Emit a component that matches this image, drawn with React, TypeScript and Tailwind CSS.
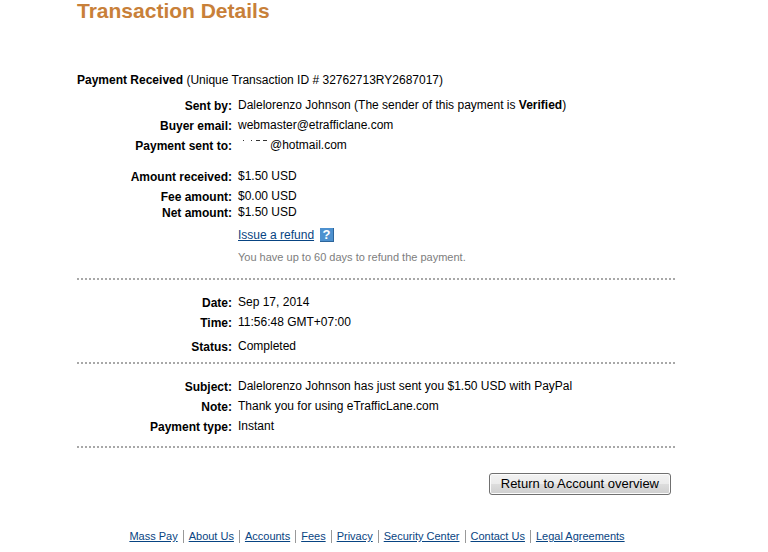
import type { ReactNode } from "react";

function Row({ label, children, gap = "mb-1" }: { label: string; children: ReactNode; gap?: string }) {
  return (
    <div className={`flex items-start gap-1.5 ${gap}`}>
      <dt className="-mb-px w-[155px] shrink-0 pt-px text-right font-bold">{label}</dt>
      <dd className="min-w-0 flex-1">{children}</dd>
    </div>
  );
}

function Divider() {
  return (
    <hr className="h-0.5 border-0 bg-[repeating-linear-gradient(to_right,#a8a8a8_0_2px,transparent_2px_4px)]" />
  );
}

const footerLinks = [
  "Mass Pay",
  "About Us",
  "Accounts",
  "Fees",
  "Privacy",
  "Security Center",
  "Contact Us",
  "Legal Agreements",
];

export default function App() {
  return (
    <div className="bg-white pr-4 pl-[77px] font-['Liberation_Sans',Arial,sans-serif] text-xs leading-4 text-black">
      <main className="max-w-[600px]">
        <h1 className="mb-[50px] text-[21px] leading-[22px] font-bold text-[#c88039]">Transaction Details</h1>
        <p className="mb-[9px]">
          <strong>Payment Received</strong> (Unique Transaction ID # 32762713RY2687017)
        </p>
        <dl>
          <Row label="Sent by:">
            Dalelorenzo Johnson (The sender of this payment is <strong>Verified</strong>)
          </Row>
          <Row label="Buyer email:">webmaster@etrafficlane.com</Row>
          <Row label="Payment sent to:" gap="mb-[15px]">
            <span className="flex">
              <svg aria-hidden="true" className="h-4 w-8" viewBox="0 0 32 16" stroke="#333" strokeWidth="1">
                <path d="M5 3.5h1M13 3.5h1M18 3.5h4M25 3.5h4" />
              </svg>
              @hotmail.com
            </span>
          </Row>
          <Row label="Amount received:">$1.50 USD</Row>
          <Row label="Fee amount:" gap="mb-0">$0.00 USD</Row>
          <Row label="Net amount:" gap="mb-[7px]">$1.50 USD</Row>
        </dl>
        <div className="pb-[13px] pl-[161px]">
          <div className="mb-1.5 flex items-center gap-1.5">
            <a href="#refund" className="text-[#084482] underline">Issue a refund</a>
            <button
              type="button"
              aria-label="Refund help"
              className="flex size-3.5 items-center justify-center border-r border-b border-[#2d659b] bg-[#4d91cf] text-[13px] leading-3 font-bold text-white"
            >
              ?
            </button>
          </div>
          <p className="text-[11px] text-[#7d7d7d]">You have up to 60 days to refund the payment.</p>
        </div>
        <Divider />
        <dl className="pt-3.5 pb-2">
          <Row label="Date:">Sep 17, 2014</Row>
          <Row label="Time:" gap="mb-2">11:56:48 GMT+07:00</Row>
          <Row label="Status:" gap="mb-0">Completed</Row>
        </dl>
        <Divider />
        <dl className="pt-3.5 pb-3">
          <Row label="Subject:">Dalelorenzo Johnson has just sent you $1.50 USD with PayPal</Row>
          <Row label="Note:">Thank you for using eTrafficLane.com</Row>
          <Row label="Payment type:" gap="mb-0">Instant</Row>
        </dl>
        <Divider />
        <div className="flex justify-end pt-[25px] pr-1.5 pb-[35px]">
          <button
            type="button"
            className="h-[22px] rounded-[3px] border border-[#707070] bg-[linear-gradient(#f2f2f2_0%,#ebebeb_50%,#dddddd_50%,#cfcfcf_100%)] px-[11px] text-[13px] leading-5 shadow-[inset_0_0_0_1px_#fcfcfc]"
          >
            Return to Account overview
          </button>
        </div>
      </main>
      <footer className="max-w-[600px] pb-2">
        <ul className="flex flex-wrap justify-center text-[11px] leading-[13px] text-[#084482]">
          {footerLinks.map((name) => (
            <li key={name} className="border-l border-[#999] px-[5px] first:border-l-0">
              <a href="#footer" className="underline">{name}</a>
            </li>
          ))}
        </ul>
      </footer>
    </div>
  );
}
